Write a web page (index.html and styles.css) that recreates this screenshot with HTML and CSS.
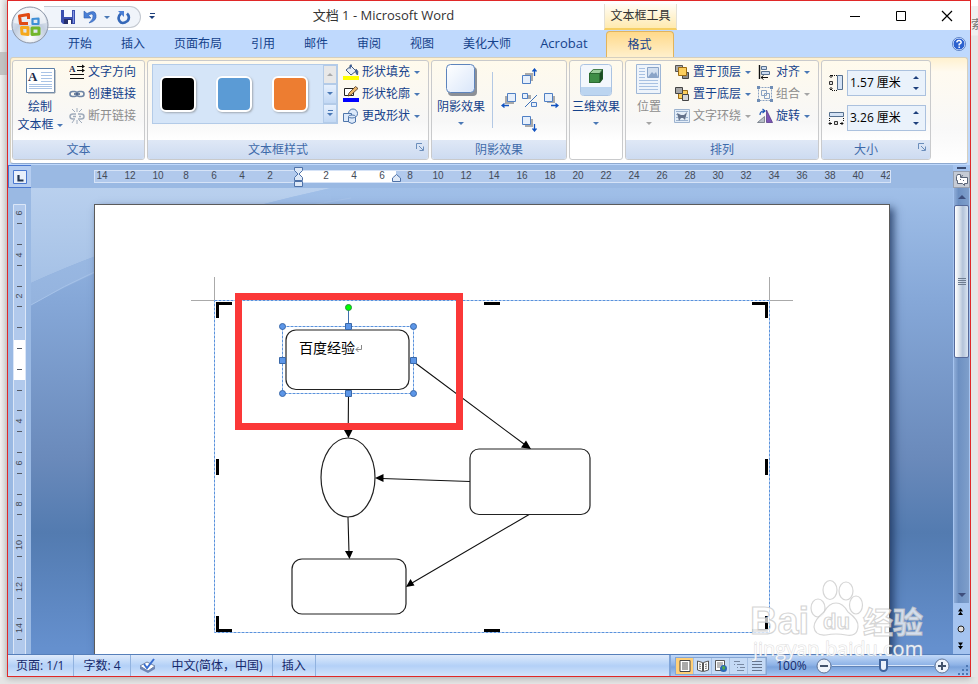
FILE: index.html
```html
<!DOCTYPE html>
<html lang="zh-CN">
<head>
<meta charset="utf-8">
<title>文档 1 - Microsoft Word</title>
<link rel="stylesheet" href="styles.css">
</head>
<body>
<div class="desk desk-left"><i></i></div>
<div class="window">
  <header class="titlebar">
    <button class="orb" aria-label="Office 按钮">
      <svg viewBox="0 0 38 38" width="38" height="38">
        <defs>
          <radialGradient id="orb" cx=".5" cy=".85" r=".9"><stop offset="0" stop-color="#fff"/><stop offset=".5" stop-color="#c3cfe0"/><stop offset="1" stop-color="#f4f6fa"/></radialGradient>
        </defs>
        <circle cx="19" cy="19" r="18" fill="url(#orb)" stroke="#8b95a6"/>
        <path d="M3 17a16 15 0 0 1 32 0q-16 4-32 0" fill="#fff" opacity=".55"/>
        <g fill="none" stroke-width="3" stroke-linejoin="round">
          <path d="M17 17.500H9.500L8.500 10l9-1.500V13" stroke="#e04a14"/>
          <path d="M21.500 13l6-.5V18h-6z" stroke="#3f8fd6" stroke-width="2.200"/>
          <path d="M10.500 21.500H17v7l-6-.8z" stroke="#f5a81c"/>
          <path d="M21 28.500V22h7v6z" stroke="#72b62b"/>
        </g>
      </svg>
    </button>
    <div class="qat">
      <button aria-label="保存"><svg viewBox="0 0 16 16" width="16" height="16"><path d="M1 1h14v14H3l-2-2z" fill="#3a4fb0"/><path d="M4 1h8v7H4z" fill="#f4f7ff"/><path d="M4 10h8v5H4z" fill="#26306c"/><path d="M8 11h3v4H8z" fill="#fff"/><path d="M13 2h1v12h-1z" fill="#8496e0"/></svg></button>
      <button aria-label="撤消"><svg viewBox="0 0 16 16" width="16" height="16"><path d="M2 2v7h7L6.500 6.500Q10 3.500 11 6.500T7 14Q15 12 14 6T5 4.500z" fill="#4a7fd6" stroke="#2a5cb0" stroke-width=".6"/></svg></button>
      <i class="arrow"></i>
      <button aria-label="恢复"><svg viewBox="0 0 16 16" width="16" height="16"><path d="M5 4.500Q1 8 3.500 12t8 0Q14.500 8 11 4.500" fill="none" stroke="#3568b8" stroke-width="2.600"/><path d="M2 2h6v6L6 6z" fill="#4a7fd6"/></svg></button>
    </div>
    <button class="qat-more" aria-label="自定义快速访问工具栏"><i class="bar"></i><i class="arrow dark"></i></button>
    <h1>文档 1 - Microsoft Word</h1>
    <div class="context">文本框工具</div>
    <div class="controls">
      <button aria-label="最小化"><svg viewBox="0 0 12 12" width="12" height="12"><path d="M1 6.500h10" stroke="#000"/></svg></button>
      <button aria-label="最大化"><svg viewBox="0 0 12 12" width="12" height="12"><path d="M1.500 1.500h9v9h-9z" fill="none" stroke="#000"/></svg></button>
      <button aria-label="关闭"><svg viewBox="0 0 12 12" width="12" height="12"><path d="M1 1l10 10M11 1L1 11" stroke="#000" stroke-width="1.200"/></svg></button>
    </div>
  </header>

  <nav class="tabs">
    <a href="#home">开始</a><a href="#insert">插入</a><a href="#layout">页面布局</a><a href="#refs">引用</a><a href="#mail">邮件</a><a href="#review">审阅</a><a href="#view">视图</a><a href="#beautify">美化大师</a><a class="acrobat" href="#acrobat">Acrobat</a><a class="active" href="#format">格式</a>
    <button class="help" aria-label="帮助"><svg viewBox="0 0 14 14" width="14" height="14"><circle cx="7" cy="7" r="6" fill="#2d62cf" stroke="#dbe8ff"/><circle cx="7" cy="7" r="6.600" fill="none" stroke="#3f69b5" stroke-width=".7"/><path d="M4.800 5.400Q5 3.400 7 3.400T9.200 5.300Q9.200 6.500 7.200 7.300V8.500M7.200 9.600v1.500" fill="none" stroke="#fff" stroke-width="1.500"/></svg></button>
  </nav>

  <section class="ribbon">
    <div class="group g-text">
      <div class="body">
        <button class="big">
          <svg viewBox="0 0 32 28" width="32" height="32"><path d="M2.500 2.500h28v24h-28z" fill="#fff" stroke="#5b7fa8"/><path d="M31 4v23H4" fill="none" stroke="#8b98a8"/><text x="4" y="15" class="serif" font-size="13">A</text><path d="M17 6.500h11M17 9.500h11M17 12.500h11M17 15.500h11M5 18.500h23M5 20.500h23M5 22.500h23" stroke="#a9c3e6"/></svg>
          <span>绘制<br>文本框 <i class="arrow"></i></span>
        </button>
        <div class="rows">
          <button><svg viewBox="0 0 16 16" width="16" height="16"><text x="0" y="8" class="serif" font-size="9">A</text><path d="M8 2.500h7M8 6.500h7M1 10.500h14M1 14.500h14" stroke="#111" stroke-width="1.200"/><path d="M13 .5l3 2-3 2M13 4.500l3 2-3 2" fill="#111"/></svg>文字方向</button>
          <button><svg viewBox="0 0 16 16" width="16" height="16"><g fill="none" stroke="#6f86a6" stroke-width="1.600"><rect x="1" y="5.500" width="7" height="5" rx="2.500"/><rect x="8" y="5.500" width="7" height="5" rx="2.500"/><path d="M5 8h6" stroke="#445e86"/></g></svg>创建链接</button>
          <button disabled><svg viewBox="0 0 16 16" width="16" height="16"><g fill="none" stroke="#a0acbc" stroke-width="1.500"><path d="M7 6H4Q1 6 1 8.500T4 11h2M9 6h3q3 0 3 2.500T12 11H9M4 8.500h3M10 8.500h2"/><path d="M8 0v4M3 1l3 3M13 1l-3 3M8 12v4M5 12l-2 3M10 12l3 3" stroke-width="1"/></g></svg>断开链接</button>
        </div>
      </div>
      <h2>文本</h2>
    </div>

    <div class="group g-styles">
      <div class="body">
        <div class="gallery">
          <button class="swatch black" aria-label="黑色"></button>
          <button class="swatch blue" aria-label="蓝色"></button>
          <button class="swatch orange" aria-label="橙色"></button>
          <div class="scroller">
            <button class="off" aria-label="上一行"><i class="arrow up"></i></button>
            <button aria-label="下一行"><i class="arrow"></i></button>
            <button aria-label="其他"><i class="bar"></i><i class="arrow"></i></button>
          </div>
        </div>
        <div class="rows">
          <button><svg viewBox="0 0 16 16" width="16" height="16"><path d="M0 12h16v4H0z" fill="#ff0"/><path d="M3 6l5-4 5 5-5 4z" fill="#e8eef8" stroke="#40597f"/><path d="M7 5V1h2M13 5q3 2 1.500 6Q12 10 13 5" fill="#3b62a8" stroke="#40597f" stroke-width=".8"/></svg>形状填充<i class="arrow"></i></button>
          <button><svg viewBox="0 0 16 16" width="16" height="16"><path d="M0 12h16v4H0z" fill="#00f"/><path d="M1.500 2.500h9v7h-9z" fill="#fff" stroke="#222"/><path d="M5 10l1-3 6.500-6.500 2.500 2L8 9z" fill="#e9b46a" stroke="#4b3520" stroke-width=".8"/></svg>形状轮廓<i class="arrow"></i></button>
          <button><svg viewBox="0 0 16 16" width="16" height="16"><g fill="#dce9fa" stroke="#4f76ab"><circle cx="10" cy="5.500" r="4.500"/><path d="M.5 5.500h8v8h-8z"/><path d="M5.500 9v5q3.500 3 7 0V9"/><ellipse cx="9" cy="8.500" rx="3.500" ry="1.500"/></g></svg>更改形状<i class="arrow"></i></button>
        </div>
      </div>
      <h2 class="with-launch">文本框样式</h2>
      <button class="launch" aria-label="文本框样式选项"><svg viewBox="0 0 8 8" width="8" height="8"><path d="M.5 6V.5H6M3 3l4 4M7.500 3.500v4h-4" fill="none" stroke="#6a8dbb"/></svg></button>
    </div>

    <div class="group g-shadow">
      <div class="body">
        <button class="big">
          <svg viewBox="0 0 32 32" width="32" height="32"><defs><linearGradient id="pane" x2="1" y2="1"><stop stop-color="#fff"/><stop offset="1" stop-color="#d9e6fa"/></linearGradient></defs><rect x="3" y="3" width="29" height="29" rx="4" fill="#8c9097"/><rect x="1.500" y=".5" width="28" height="28" rx="4" fill="url(#pane)" stroke="#5d84bd"/></svg>
          <span>阴影效果<i class="arrow"></i></span>
        </button>
        <div class="nudges">
          <button class="n-up" aria-label="上移"><svg viewBox="0 0 16 16" width="16" height="16"><path d="M3 5h8v8H3z" fill="#aaa"/><path d="M.5 7.500h8v8h-8z" fill="#e6effb" stroke="#4f7fc4"/><path d="M12.500 8V2M10.500 3.500l2-2.500 2 2.500" fill="none" stroke="#1253c0" stroke-width="1.300"/></svg></button>
          <button class="n-left" aria-label="左移"><svg viewBox="0 0 16 16" width="16" height="16"><path d="M4 4h9v8H4z" fill="#aaa"/><path d="M6.500 1.500h8v8h-8z" fill="#e6effb" stroke="#4f7fc4"/><path d="M8 13.500H1M3.500 11.500l-2.500 2 2.500 2" fill="none" stroke="#1253c0" stroke-width="1.300"/></svg></button>
          <button class="n-mid" aria-label="设置阴影"><svg viewBox="0 0 16 16" width="16" height="16"><path d="M3 3h6v4H3z" fill="#aaa"/><path d="M.5 1.500h5v5h-5zM9.500 10.500h5v4h-5z" fill="#e6effb" stroke="#4f7fc4"/><path d="M3 15L15 3" stroke="#3f72b8"/></svg></button>
          <button class="n-right" aria-label="右移"><svg viewBox="0 0 16 16" width="16" height="16"><path d="M4 4h8v7H4z" fill="#aaa"/><path d="M1.500 1.500h8v8h-8z" fill="#e6effb" stroke="#4f7fc4"/><path d="M8 13.500h7M12.500 11.500l2.500 2-2.500 2" fill="none" stroke="#1253c0" stroke-width="1.300"/></svg></button>
          <button class="n-down" aria-label="下移"><svg viewBox="0 0 16 16" width="16" height="16"><path d="M3 3h8v8H3z" fill="#aaa"/><path d="M.5 .5h8v8h-8z" fill="#e6effb" stroke="#4f7fc4"/><path d="M12.500 8v6M10.500 12.500l2 2.500 2-2.500" fill="none" stroke="#1253c0" stroke-width="1.300"/></svg></button>
        </div>
      </div>
      <h2>阴影效果</h2>
    </div>

    <div class="group g-3d">
      <button class="big">
        <svg viewBox="0 0 32 32" width="32" height="32"><rect x=".5" y=".5" width="31" height="31" rx="3" fill="#f3f7fc" stroke="#aac3e2"/><path d="M1 23h30v6q0 2-2 2H3q-2 0-2-2z" fill="#bcd5f0"/><path d="M9 9l4-4h10l-3 4z" fill="#9ccd9c"/><path d="M9 9h11v10H9z" fill="#3f8d46"/><path d="M20 9l3-4v10l-3 4z" fill="#1c4d22"/><path d="M9.500 18.500v-9l4-4h9v9l-3 4zM9.500 9.500h10v9M19.500 9.500l3-4" fill="none" stroke="#245c2a" stroke-width=".7"/></svg>
        <span>三维效果<i class="arrow"></i></span>
      </button>
    </div>

    <div class="group g-arrange">
      <div class="body">
        <button class="big" disabled>
          <svg viewBox="0 0 26 32" width="26" height="32"><path d="M.5 .5h24v29H.5z" fill="#eef4fb" stroke="#9fb7d6"/><path d="M3 4.500h6M3 7.500h6M3 10.500h6M3 13.500h6M3 16.500h19M3 19.500h19M3 22.500h19M3 25.500h19" stroke="#a8c1e2"/><path d="M11.500 3.500h11v10h-11z" fill="#d2dfef" stroke="#8ba5c8"/><path d="M12 13l4-5 2 2 2-2 2 5z" fill="#8ba5c8"/></svg>
          <span>位置<i class="arrow"></i></span>
        </button>
        <div class="rows">
          <button><svg viewBox="0 0 16 16" width="16" height="16"><path d="M1.500 1.500h7v6h-7z" fill="#a7a7a7" stroke="#555"/><path d="M8.500 8.500h6v6h-6z" fill="#8b8b8b" stroke="#444"/><path d="M4.500 3.500h8v8h-8z" fill="#fccf5d" stroke="#9c6b13"/></svg>置于顶层<i class="arrow"></i></button>
          <button><svg viewBox="0 0 16 16" width="16" height="16"><path d="M4.500 4.500h9v8h-9z" fill="#fccf5d" stroke="#9c6b13"/><path d="M1.500 1.500h7v6h-7z" fill="#a7a7a7" stroke="#444"/><path d="M8.500 8.500h6v6h-6z" fill="#d5d5d5" stroke="#444"/></svg>置于底层<i class="arrow"></i></button>
          <button disabled><svg viewBox="0 0 16 16" width="16" height="16"><path d="M.5 1.500h15v13H.5z" fill="#e3edf8" stroke="#9db3cf"/><path d="M2 3.500h12M2 6.500h3M2 9.500h2M12 9.500h2M2 12.500h12" stroke="#9db3cf"/><path d="M3 5l4 2 3 0 3-3-1 4-1 4-2-2H7l-2 3z" fill="#63718a"/></svg>文字环绕<i class="arrow"></i></button>
        </div>
        <div class="rows">
          <button><svg viewBox="0 0 16 16" width="16" height="16"><path d="M2.500 1v14" stroke="#111" stroke-width="1.400"/><path d="M4.500 2.500h5v3h-5zM4.500 7.500h8v3h-8z" fill="#cddcf0" stroke="#56708f"/><path d="M4 13.500h7M6.500 11.500l-2.500 2 2.500 2" fill="none" stroke="#111"/></svg>对齐<i class="arrow"></i></button>
          <button disabled><svg viewBox="0 0 16 16" width="16" height="16"><g fill="none" stroke="#8aa2c2"><path d="M1.500 1.500h13v13h-13z" stroke-dasharray="2 1"/><path d="M4.500 4.500h5v5h-5zM7.500 7.500h5v5h-5z"/></g><path d="M0 0h3v3H0zM13 0h3v3h-3zM0 13h3v3H0zM13 13h3v3h-3z" fill="#6f8db5"/></svg>组合<i class="arrow"></i></button>
          <button><svg viewBox="0 0 16 16" width="16" height="16"><path d="M9.500 2l6 12.500h-6z" fill="#7d55b5" stroke="#4b2f80" stroke-width=".7"/><path d="M7.500 8.500v6H.5z" fill="#b9c0c9" stroke="#5b6673" stroke-width=".7"/><path d="M3 7q0-4 4-4M5.500 1L8 3 5.500 5" fill="none" stroke="#1f58b5" stroke-width="1.200"/></svg>旋转<i class="arrow"></i></button>
        </div>
      </div>
      <h2>排列</h2>
    </div>

    <div class="group g-size">
      <div class="body">
        <div class="field">
          <label for="h" aria-label="高度"><svg viewBox="0 0 16 18" width="16" height="18"><path d="M9.500 1.500h5v14h-5z" fill="#d5e3f5" stroke="#56708f"/><path d="M1.500 7.500h3v3h-3z" fill="#ddd" stroke="#333"/><path d="M3 4V1M1.500 2.500L3 1l1.500 1.500M3 13v3M1.500 14.500L3 16l1.500-1.500" stroke="#111" fill="none"/><path d="M4 1.500h5M4 16.500h5" stroke="#111" stroke-dasharray="1 1"/></svg></label>
          <div class="spin"><input id="h" type="text" value="1.57 厘米"><div><button aria-label="增加高度"><i class="arrow up dark"></i></button><button aria-label="减小高度"><i class="arrow dark"></i></button></div></div>
        </div>
        <div class="field">
          <label for="w" aria-label="宽度"><svg viewBox="0 0 16 18" width="16" height="18"><path d="M1.500 3.500h14v4h-14z" fill="#d5e3f5" stroke="#56708f"/><path d="M6.500 12.500h3v3h-3z" fill="#ddd" stroke="#333"/><path d="M4 14.500H1M2.500 13L1 14.500 2.500 16M12 14.500h3M13.500 13l1.500 1.500-1.500 1.500" stroke="#111" fill="none"/><path d="M1.500 9v4M15.500 9v4" stroke="#111" stroke-dasharray="1 1"/></svg></label>
          <div class="spin"><input id="w" type="text" value="3.26 厘米"><div><button aria-label="增加宽度"><i class="arrow up dark"></i></button><button aria-label="减小宽度"><i class="arrow dark"></i></button></div></div>
        </div>
      </div>
      <h2 class="with-launch">大小</h2>
      <button class="launch" aria-label="大小选项"><svg viewBox="0 0 8 8" width="8" height="8"><path d="M.5 6V.5H6M3 3l4 4M7.500 3.500v4h-4" fill="none" stroke="#6a8dbb"/></svg></button>
    </div>
  </section>

  <main class="work">
    <div class="left">
      <button class="tabstop" aria-label="制表符"><svg viewBox="0 0 14 14" width="14" height="14"><path d="M.5 .5h13v13H.5z" fill="#e9f0fb" stroke="#4a78d0"/><path d="M5.500 5v5.500h5" fill="none" stroke="#22344f" stroke-width="2.200"/></svg></button>
      <svg class="vruler" viewBox="0 0 13 450" width="13" height="450">
        <path d="M.5 460V.5h12V460" fill="#b1c9ec" stroke="#dbe6f7"/>
        <path d="M1 136h11v40H1z" fill="#fff"/>
        <path d="M4 19.500h5M4 40.500h5M4 61.500h5M4 82.500h5M4 102.500h5M4 123.500h5M4 144.500h5M4 165.500h5M4 186.500h5M4 206.500h5M4 227.500h5M4 248.500h5M4 269.500h5M4 290.500h5M4 310.500h5M4 331.500h5M4 352.500h5M4 373.500h5M4 394.500h5M4 414.500h5M4 435.500h5" stroke="#555c68"/>
        <g class="nums">
          <text transform="translate(9 9) rotate(-90)">6</text><text transform="translate(9 51) rotate(-90)">4</text><text transform="translate(9 92) rotate(-90)">2</text><text transform="translate(9 217) rotate(-90)">4</text><text transform="translate(9 259) rotate(-90)">6</text><text transform="translate(9 300) rotate(-90)">8</text><text transform="translate(9 341) rotate(-90)">10</text><text transform="translate(9 383) rotate(-90)">12</text><text transform="translate(9 424) rotate(-90)">14</text>
        </g>
      </svg>
    </div>

    <div class="center">
      <div class="hbar">
        <div class="hruler">
          <ol><li>14<li>12<li>10<li>8<li>6<li>4<li>2<li class="zero"><li class="on">2<li class="on">4<li class="on">6<li>8<li>10<li>12<li>14<li>16<li>18<li>20<li>22<li>24<li>26<li>28<li>30<li>32<li>34<li>36<li>38<li>40<li>42</ol>
        </div>
        <svg class="indent first" viewBox="0 0 9 21" width="9" height="21"><path d="M.5 .5h8v3L5 7l3.500 3.500v3h-8v-3L4 7 .5 3.500z" fill="#dfe9f7" stroke="#4f72a8"/><path d="M.5 14.500h8v5h-8z" fill="#dfe9f7" stroke="#4f72a8"/></svg>
        <svg class="indent right" viewBox="0 0 9 8" width="9" height="8"><path d="M.5 7.500V4L4.500 .5l4 3.500v3.500z" fill="#dfe9f7" stroke="#4f72a8"/></svg>
      </div>
      <div class="canvas">
        <svg class="swoosh" viewBox="0 0 320 140" width="320" height="140"><defs><linearGradient id="glow" x2="0" y2="1"><stop stop-color="#b9d0ee"/><stop offset="1" stop-color="#a5c1e6"/></linearGradient><linearGradient id="band" x2="0" y2="1"><stop stop-color="#a0bfe8"/><stop offset="1" stop-color="#94b3de"/></linearGradient></defs><path d="M0 0h300Q120 40 0 95z" fill="url(#glow)"/><path d="M0 95Q120 40 300 0v15Q130 45 0 117z" fill="url(#band)"/><path d="M0 117Q130 40 320 10" fill="none" stroke="#a6c2e8"/></svg>
        <div class="page">
          <svg viewBox="95 205 794 449" width="794" height="449" aria-label="流程图">
            <g fill="none">
              <path d="M191 300.500h23M214.500 277v23M770 300.500h23M769.500 277v23" stroke="#aaa"/>
              <path d="M214.500 300.500h555v332h-555z" stroke="#5a92dc" stroke-dasharray="3 1"/>
              <path d="M217.500 318v-14.500H232M752 303.500h14.500V318M217.500 616v14.500H232M484 303.500h16M484 630.500h16M217.500 459v16M766.500 459v16" stroke="#000" stroke-width="3"/>
              <path d="M766.500 616v13" stroke="#000" stroke-width="3"/><path d="M752 630.500h16" stroke="#aaa" stroke-width="3"/>
              <path d="M348.500 394l-.3 38M414 362l110 82M470 481.500l-88-3M348 517l1 36M530 514L412 583" stroke="#111" stroke-width="1.100"/>
              <g stroke="#222" stroke-width="1.200" fill="#fff"><rect x="286" y="330" width="123" height="59.500" rx="10"/><ellipse cx="348" cy="477.500" rx="27" ry="39.500"/><rect x="470" y="449" width="120" height="65.500" rx="9"/><rect x="292" y="559" width="114" height="55" rx="10"/></g>
              <path d="M344 430h8.500l-4 8zM531 449l-10-1.500 5-7zM375 478l8.500-4v8zM345 551h8l-3.500 8zM406 587l4.500-8 4 6.500z" fill="#000"/>
            </g>
            <text class="doc" x="299" y="353">百度经验</text>
            <path d="M361.500 345v4.500H356M358.500 347l-2.500 2.500 2.500 2.500" fill="none" stroke="#888"/>
            <path d="M282.500 326.500h131v67h-131z" fill="none" stroke="#5a92dc" stroke-dasharray="3 1"/>
            <path d="M348.500 310v16" stroke="#3e6fae"/>
            <g fill="#5c96e8" stroke="#3a68a8"><circle cx="282.500" cy="326.500" r="3"/><circle cx="413.500" cy="326.500" r="3"/><circle cx="282.500" cy="393.500" r="3"/><circle cx="413.500" cy="393.500" r="3"/><path d="M345.500 323.500h6v6h-6zM345.500 390.500h6v6h-6zM279.500 357.500h6v6h-6zM410.500 357.500h6v6h-6z"/><circle cx="348.500" cy="307.500" r="3" fill="#0f0" stroke="#2b9040"/></g>
            <path d="M238.500 296.500h221v130h-221z" fill="none" stroke="#fb3838" stroke-width="7"/>
          </svg>
        </div>
      </div>
    </div>

    <div class="scroll">
      <button class="split" aria-label="拆分窗口"></button>
      <button class="rulerbtn" aria-label="标尺"><svg viewBox="0 0 14 14" width="14" height="14"><path d="M2.500 1.500h3v3h7v6h-3v2l-2-2h-5v-3h-1v-4z" fill="#fff" stroke="#5a6578"/><path d="M5 6.500h1M8 7.500h1M6 3.500l2-1" stroke="#5a6578"/></svg></button>
      <div class="track">
        <button aria-label="向上滚动"><i class="tri up"></i></button>
        <div class="thumb"><i></i></div>
        <button aria-label="向下滚动"><i class="tri"></i></button>
      </div>
      <div class="browse">
        <button aria-label="前一页"><svg viewBox="0 0 7 8" width="7" height="8"><path d="M3.500 0L6 3.500H1zM3.500 3.500L6 7H1z"/></svg></button>
        <button aria-label="选择浏览对象"><svg viewBox="0 0 8 8" width="8" height="8"><circle cx="4" cy="4" r="3" fill="#ddd" stroke="#222"/></svg></button>
        <button aria-label="下一页"><svg viewBox="0 0 7 8" width="7" height="8"><path d="M1 .5h5L3.500 4zM1 4h5L3.500 7.500z"/></svg></button>
      </div>
    </div>
  </main>

  <footer class="status">
    <button>页面: 1/1</button><button>字数: 4</button>
    <button class="proof" aria-label="校对"><svg viewBox="0 0 17 16" width="17" height="16"><path d="M1 8l7-4 8 4-7 5z" fill="#fff" stroke="#7385a5"/><path d="M1 8v3l8 4 7-4V8l-7 5z" fill="#6f86b4"/><path d="M5 6l3 4 7-9" fill="none" stroke="#3a6ed0" stroke-width="2"/></svg></button>
    <button>中文(简体，中国)</button><button>插入</button>
    <div class="zoom">
      <div class="views">
        <button class="on" aria-label="页面视图"><svg viewBox="0 0 12 12" width="12" height="12"><path d="M1 .5h10v11H1z" fill="#fff" stroke="#444"/><path d="M3 3h6M3 5h6M3 7h6M3 9h6" stroke="#555"/></svg></button>
        <button aria-label="阅读版式"><svg viewBox="0 0 12 12" width="12" height="12"><path d="M.5 1l5 1.500v9l-5-1.500zM11.500 1l-5 1.500v9l5-1.500z" fill="#fff" stroke="#555"/><path d="M2 4l2 .5M2 6l2 .5M2 8l2 .5M10 4l-2 .5M10 6l-2 .5M10 8l-2 .5" stroke="#777"/></svg></button>
        <button aria-label="Web 版式"><svg viewBox="0 0 12 12" width="12" height="12"><path d="M.5 .5h9v10h-9z" fill="#fff" stroke="#555"/><path d="M2 3h6M2 5h6M2 7h3" stroke="#777"/><circle cx="8.500" cy="8.500" r="3.500" fill="#2d68b5"/><path d="M7 7q2-2 3 0t-2 3z" fill="#4faa4a"/></svg></button>
        <button aria-label="大纲"><svg viewBox="0 0 12 12" width="12" height="12"><path d="M1 1.500h6M4 4.500h7M7 7.500h5M4 10.500h7" stroke="#7787a0"/><path d="M1 4.500h1M4 7.500h1" stroke="#7787a0"/></svg></button>
        <button aria-label="草稿"><svg viewBox="0 0 12 12" width="12" height="12"><path d="M1 1.500h10M1 4.500h10M1 7.500h10M1 10.500h10" stroke="#66758d"/></svg></button>
      </div>
      <button class="pct">100%</button>
      <button class="round" aria-label="缩小"><svg viewBox="0 0 16 16" width="16" height="16"><circle cx="8" cy="8" r="7" fill="#eef3fb" stroke="#5d7398"/><path d="M4 8h8" stroke="#42526b" stroke-width="2"/></svg></button>
      <input type="range" min="0" max="100" value="50" aria-label="显示比例">
      <button class="round" aria-label="放大"><svg viewBox="0 0 16 16" width="16" height="16"><circle cx="8" cy="8" r="7" fill="#eef3fb" stroke="#5d7398"/><path d="M4 8h8M8 4v8" stroke="#42526b" stroke-width="2"/></svg></button>
      <svg class="grip" viewBox="0 0 12 12" width="12" height="12"><path d="M8 1h2v2H8zM8 5h2v2H8zM4 5h2v2H4zM8 9h2v2H8zM4 9h2v2H4zM0 9h2v2H0z" fill="#4c77b3"/></svg>
    </div>
  </footer>
</div>
<div class="desk desk-right"><span>索</span></div>

<svg class="mark" viewBox="0 0 180 84" width="180" height="84">
  <g fill="#fff" fill-opacity=".72" stroke="#c8c8c8" stroke-opacity=".75" stroke-width="1.200">
    <ellipse cx="69" cy="31" rx="7" ry="9"/><ellipse cx="81" cy="13" rx="7" ry="9.500"/><ellipse cx="97" cy="14" rx="7" ry="9"/><ellipse cx="107" cy="28" rx="6.500" ry="9"/>
    <path d="M87 26q7 0 12 9 11 8 10 15-1 10-12 8-10-2-20 0-11 1-12-8 0-7 10-15 5-9 12-9z"/>
    <text class="logo" x="1" y="57">Bai</text>
    <text class="logo small" x="74" y="52">du</text>
    <text class="logo cjk" x="114" y="56">经验</text>
  </g>
  <text class="url" x="4" y="79">jingyan.baidu.com</text>
</svg>
</body>
</html>
```
FILE: styles.css
```css
* { box-sizing: border-box; }
body {
  margin: 0;
  height: 100vh;
  display: grid;
  grid-template-columns: 7px minmax(0, 1fr) 7px;
  padding-bottom: 7px;
  overflow: hidden;
  position: relative;
  background: #e6e6e6;
  font: 12px/18px "Open Sans", "Noto Sans CJK SC", sans-serif;
  color: #15428b;
}
button {
  border: 0; padding: 0; margin: 0; background: none;
  font: inherit; color: inherit;
  display: flex; align-items: center; justify-content: center;
}
button:disabled { color: #8d8d8d; }
svg { display: block; flex: none; }
a { color: inherit; text-decoration: none; }
h1, h2 { margin: 0; font: inherit; }
.arrow {
  display: inline-block; flex: none;
  border: 3px solid transparent; border-bottom: 0; border-top-color: #4a78b5;
}
.arrow.dark { border-top-color: #1d3f7c; }
.arrow.up { border-top: 0; border-bottom: 3px solid #1d3f7c; }
:disabled .arrow { border-top-color: #a5a5a5; }
.bar { width: 5px; height: 1px; background: #1d3f7c; }
.serif { font-family: "Liberation Serif", serif; font-weight: bold; fill: #1c2a4a; }

.desk { background: linear-gradient(#fff 6px, #f0f0f0 6px 35px, #e6e6e6 36px); overflow: hidden; color: #777; }
.desk-left { padding-top: 52px; background: linear-gradient(90deg, #f2f2f2, #dcdcdc); }
.desk-left i { display: block; height: 23px; background: #c4c4c4; }
.desk-right { padding-top: 16px; }

.window {
  display: flex; flex-direction: column;
  min-height: 0;
  border: 1px solid #e02828;
  background: #bfd9fd;
  box-shadow: 0 2px 6px #8888;
}

.titlebar { display: flex; height: 29px; flex: none; position: relative; background: #fff; color: #333; }
.orb { position: absolute; left: 3px; top: 5px; z-index: 2; border-radius: 50%; }
.qat {
  display: flex; align-items: center; gap: 6px;
  height: 22px; margin: 5px 0 0 36px; padding: 0 10px 0 16px; width: 97px;
  border: 1px solid #c3c8d0; border-left: 0; border-radius: 0 11px 11px 0;
  background: #f0f4fa;
}
.qat-more { flex-direction: column; gap: 2px; width: 22px; }
h1 { flex: 0 0 441px; text-align: center; line-height: 29px; font-size: 13px; }
.context {
  width: 73px; margin-top: 3px; text-align: center; line-height: 24px;
  background: linear-gradient(#fffdf6, #ffeab0);
  border-bottom: 2px solid #f6cf63;
  border-left: 1px solid #e3e0d6; border-right: 1px solid #e3e0d6;
  white-space: nowrap;
}
.controls { display: flex; margin-left: auto; }
.controls button { width: 46px; }

.tabs { display: flex; height: 27px; flex: none; padding-left: 46px; }
.tabs a { padding: 0 14px; margin-right: 1px; line-height: 27px; }
.tabs .acrobat { font-size: 13px; }
.tabs .active {
  margin: 1px 0 0 3px; padding: 0 21px; line-height: 26px;
  border: 1px solid #e2b45c; border-bottom: 0; border-radius: 4px 4px 0 0;
  background: linear-gradient(#ffd98a, #fff0cc);
}
.help { margin: 0 4px 0 auto; }

.ribbon {
  display: flex; gap: 2px; flex: none;
  margin: 0 2px 1px; padding: 2px 1px 3px;
  border: 1px solid #d5cfbf; border-bottom-color: #8ea9cf; border-radius: 3px;
  background: linear-gradient(#fff1cf, #fffaf0 14px, #f8f8f8 70px, #fff);
}
.group {
  display: flex; flex-direction: column; position: relative;
  height: 100px; overflow: hidden;
  border: 1px solid #c9cacc; border-radius: 3px;
  background: linear-gradient(#fffaec, #f7f7f7 60px, #fff 80px);
}
.body { display: flex; flex: 1; min-height: 0; }
.group h2 {
  height: 19px; line-height: 19px; text-align: center; color: #3e6aaa;
  background: linear-gradient(#dfe8f6, #cddbf1);
}
.group .with-launch { padding-right: 20px; }
.g-text { width: 133px; } .g-styles { width: 282px; } .g-shadow { width: 136px; }
.g-3d { width: 54px; } .g-arrange { width: 194px; } .g-size { width: 110px; }
.launch { position: absolute; right: 4px; bottom: 8px; }
.rows { display: flex; flex-direction: column; }
.rows button { height: 22px; gap: 3px; justify-content: flex-start; white-space: nowrap; }
.rows .arrow { margin-left: 1px; }
.big { flex-direction: column; justify-content: flex-start; padding-top: 3px; gap: 2px; white-space: nowrap; }
.big span { display: flex; flex-direction: column; align-items: center; gap: 6px; line-height: 18px; }
.g-text .big { width: 56px; padding-right: 2px; }
.g-text .big span { display: block; }
.g-text .arrow { vertical-align: middle; }
.g-styles .body { padding-left: 4px; gap: 5px; }
.gallery { display: flex; align-items: center; gap: 20px; height: 60px; margin-top: 3px; padding-left: 7px; border: 1px solid #b3cbe8; background: #d5e5f8; }
.swatch { width: 36px; height: 36px; border: 2px solid #fff; border-radius: 6px; box-shadow: 1px 1px 2px #7778; }
.black { background: #000; } .blue { background: #5b9bd5; } .orange { background: #ed7d31; }
.scroller { display: flex; flex-direction: column; width: 14px; align-self: stretch; margin-left: -5px; }
.scroller button { flex: 1; flex-direction: column; gap: 2px; border: 1px solid #b3cbe8; background: linear-gradient(#e6f0fd, #c2d8f4); }
.scroller .off { background: #e8e8e8; }
.scroller .off .arrow { border-bottom-color: #aaa; }
.scroller .bar { background: #4a78b5; }
.g-shadow .big { width: 58px; }
.nudges {
  display: grid; grid-template-columns: 16px 16px 16px; grid-template-rows: 16px 16px 16px; gap: 8px 5px;
  height: 56px; align-content: center; margin: 11px 0 0 2px; padding-left: 8px;
  border-left: 1px solid #b3c8e4;
}
.n-up { grid-area: 1 / 2; } .n-left { grid-area: 2 / 1; } .n-mid { grid-area: 2 / 2; }
.n-right { grid-area: 2 / 3; } .n-down { grid-area: 3 / 2; }
.g-arrange .big { width: 46px; }
.g-arrange .rows + .rows { margin-left: 6px; }
.g-arrange .rows { margin-left: 2px; }
.g-size .body { flex-direction: column; gap: 9px; padding: 9px 4px 0 6px; }
.field { display: flex; gap: 3px; align-items: center; }
.spin { display: flex; flex: 1; height: 26px; border: 1px solid #abc1de; background: #eaf2fb; }
.spin input { width: 100%; min-width: 0; border: 0; padding: 0 0 0 2px; background: none; font: inherit; color: #000; }
.spin div { display: flex; flex-direction: column; justify-content: center; width: 18px; flex: none; }
.spin button { height: 11px; }

.work { display: flex; flex: 1; min-height: 0; overflow: hidden; background: #9ab8e0; }
.left { width: 23px; flex: none; background: #9ab9e3; }
.tabstop { width: 24px; height: 23px; border: 1px solid #4a78d0; background: #b5cdf0; }
.vruler { margin: 16px 0 0 5px; }
.nums { font: 9px "Liberation Sans", sans-serif; fill: #444b58; text-anchor: middle; }
.center { display: flex; flex-direction: column; flex: 1; min-width: 0; }
.hbar { height: 23px; flex: none; padding: 5px 62px 0 63px; position: relative; background: #9ab9e3; }
.hruler { height: 13px; overflow: hidden; border: 1px solid #d6e3f7; background: #b1c9ec; }
.hruler ol { display: flex; margin: 0 0 0 -7px; padding: 0; list-style: none; }
.hruler li { flex: 0 0 28px; text-align: center; font: 10px/10px "Liberation Sans", sans-serif; color: #444b58; height: 11px; }
.hruler .on { background: #fff; }
.hruler .zero { background: linear-gradient(90deg, #b1c9ec 50%, #fff 50%); }
.indent { position: absolute; }
.indent.first { left: 263px; top: 2px; }
.indent.right { left: 361px; top: 9px; }
.canvas {
  flex: 1; min-height: 0; padding: 16px 63px 0; display: flex; position: relative; overflow: hidden;
  background: linear-gradient(#a0bfe8, #86a8d8 110px, #6a8abb 270px, #537bb0 345px, #6590ce 460px);
}
.swoosh { position: absolute; left: 0; top: 0; }
.page { flex: 1; position: relative; overflow: hidden; border: 1px solid #5b5b5b; border-bottom: 0; background: #fff; box-shadow: 4px 4px 8px #1b335ccc; }
.doc { font: 14px "Noto Sans CJK SC", sans-serif; fill: #000; }

.scroll { display: flex; flex-direction: column; width: 17px; flex: none; background: #a5c4f0; }
.split { height: 2px; margin: 2px 4px; background: #3b4c72; }
.rulerbtn { height: 17px; background: #c5cbd5; border: 1px solid #98a0ae; }
.track { display: flex; flex-direction: column; flex: 1; margin: 0 1px; background: linear-gradient(90deg, #8fadd8, #6d90c2 30%, #7f9fcb); }
.track button { height: 17px; flex: none; }
.track button:last-child { margin-top: auto; }
.tri { border: 4px solid transparent; border-bottom: 0; border-top-color: #3e4f7d; }
.tri.up { border-top: 0; border-bottom: 4px solid #3e4f7d; }
.thumb { display: flex; align-items: center; justify-content: center; height: 153px; border: 1px solid #566a9a; border-radius: 2px; background: linear-gradient(90deg, #fff, #dfe6ee 30%, #b3c3d9 60%, #dbe5f1); }
.thumb i { width: 8px; height: 8px; background: repeating-linear-gradient(#6e7c90 0 1px, transparent 1px 2px); }
.browse { height: 51px; flex: none; }
.browse button { width: 15px; height: 17px; }

.status {
  display: flex; height: 22px; flex: none; color: #15296b;
  border-top: 1px solid #567fba;
  background: linear-gradient(#dfeafb, #c6dcf9 6px, #b3d0f7 11px, #d3e4fb);
}
.status > button { padding: 0 9px; border-right: 1px solid #91b2df; white-space: nowrap; }
.status > button:first-child { padding-left: 8px; }
.status > .proof { padding: 0 7px 0 8px; border: 0; }
.zoom {
  display: flex; align-items: center; margin-left: auto; padding-left: 4px; width: 301px;
  border-left: 2px solid #7fa4d8;
  background: linear-gradient(#c2d9f8, #8db2e6 10px, #7ba3dc 12px, #a8c8f2);
}
.views { display: flex; border: 1px solid #86a6d3; background: #c5daf5; height: 18px; }
.views button { width: 18px; border-right: 1px solid #a5bfe3; }
.views .on { background: #ffcf77; }
.pct { width: 49px; }
.zoom input { flex: 1; min-width: 0; height: 16px; margin: 0; appearance: none; background: linear-gradient(transparent 7px, #d7e5fa 7px 8px, #5f83b8 8px 9px, transparent 9px); }
.zoom input::-webkit-slider-thumb { appearance: none; width: 9px; height: 13px; border: 2px solid #3f639c; background: #eaf1fc; border-radius: 0 0 5px 5px; }
.grip { margin-left: 8px; align-self: flex-end; }

.mark { position: absolute; left: 749px; top: 577px; pointer-events: none; }
.logo { font: bold 38px "Liberation Sans", sans-serif; }
.logo.small { font-size: 22px; }
.logo.cjk { font: bold 30px "Noto Sans CJK SC", sans-serif; }
.url { font: 20px "Open Sans", sans-serif; fill: #fff; fill-opacity: .85; stroke: #bbb; stroke-opacity: .5; stroke-width: 1px; paint-order: stroke; }
```
